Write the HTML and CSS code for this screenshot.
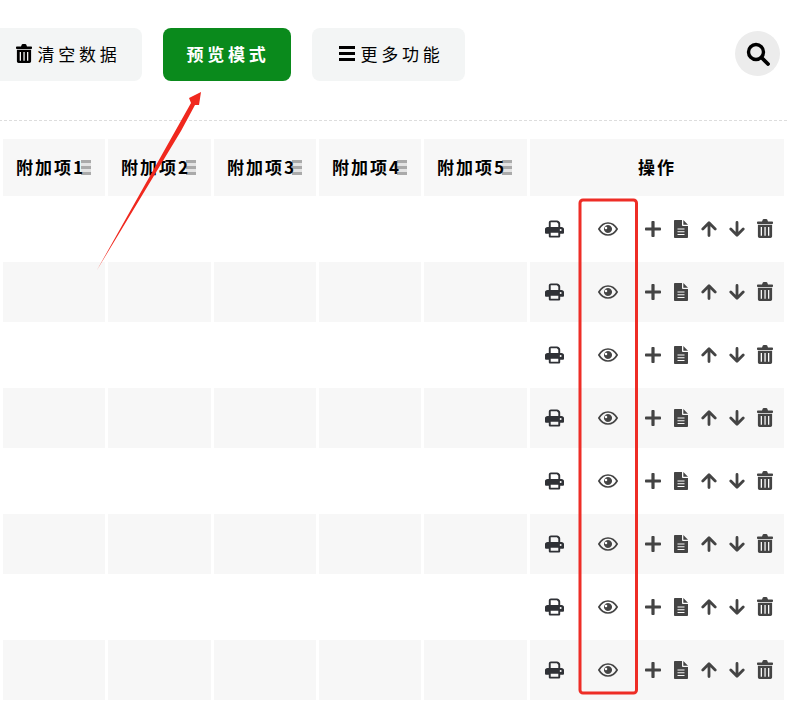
FILE: index.html
```html
<!DOCTYPE html>
<html lang="en">

<head>
    <meta charset="UTF-8">
    <meta name="viewport" content="width=device-width, initial-scale=1.0">
    <title>预览模式</title>
    <link rel="stylesheet" href="styles.css">
</head>

<body>
    <svg class="icon-defs" width="0" height="0">
        <symbol id="i-trash" viewBox="0 0 16 19">
            <path d="M5 2.400 5.800.6C6 .2 6.300 0 6.700 0h2.600c.4 0 .7.2.9.6L11 2.400h4.200c.5 0 .8.3.8.8v1c0 .4-.3.8-.8.8H.8c-.5 0-.8-.4-.8-.8v-1c0-.5.300-.8.800-.8z" />
            <path fill-rule="evenodd" d="M.9 5.700h14.200v11.600c0 .9-.8 1.700-1.700 1.700H2.600c-.9 0-1.700-.8-1.700-1.700zm2.800 2.300v8.800h1.300V8zm3.700 0v8.800h1.300V8zm3.600 0v8.800h1.300V8z" />
        </symbol>
        <symbol id="i-print" viewBox="0 0 20 18">
            <path fill-rule="evenodd" d="M4 7V2.200C4 1 5 0 6.200 0h6.600c.6 0 1.100.2 1.500.6l1.100 1.100c.4.400.6.900.6 1.500V7h1.200C19 7 20 8 20 9.300V13c0 .6-.4 1-1 1h-3v2.500c0 .8-.7 1.500-1.500 1.500h-9C4.700 18 4 17.300 4 16.500V14H1c-.6 0-1-.4-1-1V9.300C0 8 1 7 2.800 7zm2-5v5h8V3.500L12.500 2zm0 11v3h8v-3zm10.500-4a1 1 0 1 0 0 2 1 1 0 0 0 0-2z" />
        </symbol>
        <symbol id="i-eye" viewBox="0 0 20 14">
            <path fill="none" stroke="currentColor" stroke-width="1.700" d="M.9 7C3.200 3 6.400 1 10 1s6.800 2 9.100 6c-2.300 4-5.500 6-9.100 6S3.200 11 .9 7z" />
            <path fill-rule="evenodd" d="M10 3a4 4 0 1 1-.01 0zM8 4.700a1.300 1.300 0 1 0 .01 2.600A1.300 1.300 0 0 0 8 4.700z" />
        </symbol>
        <symbol id="i-plus" viewBox="0 0 16 16">
            <path d="M6.400 1c0-.6.500-1 1-1h1.200c.6 0 1 .4 1 1v5.400H15c.6 0 1 .5 1 1v1.200c0 .6-.4 1-1 1H9.600V15c0 .6-.4 1-1 1H7.400c-.5 0-1-.4-1-1V9.600H1c-.6 0-1-.4-1-1V7.400c0-.5.4-1 1-1h5.400z" />
        </symbol>
        <symbol id="i-file" viewBox="0 0 14 18">
            <path fill-rule="evenodd" d="M0 .8C0 .4.400 0 .8 0H8v5c0 .5.500 1 1 1h5v11.200c0 .4-.4.800-.8.800H.8c-.4 0-.8-.4-.8-.8zM3.500 8.500v1.100h7V8.500zm0 2.700v1.100h7v-1.100zm0 2.700v1.100h7v-1.100z" />
            <path d="M9.300 0 14 4.700H9.300z" />
        </symbol>
        <symbol id="i-up" viewBox="0 0 16 16">
            <path fill="none" stroke="currentColor" stroke-width="2.800" stroke-linecap="round" stroke-linejoin="round" d="M8 14.600V2M1.800 8 8 1.800 14.200 8" />
        </symbol>
        <symbol id="i-down" viewBox="0 0 16 16">
            <path fill="none" stroke="currentColor" stroke-width="2.800" stroke-linecap="round" stroke-linejoin="round" d="M8 1.400V14M1.800 8 8 14.200 14.200 8" />
        </symbol>
    </svg>

    <div class="page">
        <div class="toolbar">
            <button class="btn">
                <svg class="btn-icon"><use href="#i-trash" /></svg>
                <span>清空数据</span>
            </button>
            <button class="btn btn-green">预览模式</button>
            <button class="btn">
                <span class="bars"><i></i><i></i><i></i></span>
                <span>更多功能</span>
            </button>
            <button class="search">
                <svg viewBox="0 0 24 24" width="24" height="24">
                    <circle cx="10" cy="10" r="7.500" fill="none" stroke="#000" stroke-width="3.400" />
                    <path d="M15.500 15.500 22 22" stroke="#000" stroke-width="3.800" stroke-linecap="round" />
                </svg>
            </button>
        </div>

        <table class="grid">
            <thead>
                <tr>
                    <th class="w102"><span class="sort"></span><span class="th-text">附加项1</span></th>
                    <th class="w103"><span class="sort"></span><span class="th-text">附加项2</span></th>
                    <th class="w102"><span class="sort"></span><span class="th-text">附加项3</span></th>
                    <th class="w102"><span class="sort"></span><span class="th-text">附加项4</span></th>
                    <th class="w103"><span class="sort"></span><span class="th-text">附加项5</span></th>
                    <th class="op"><span class="th-text">操作</span></th>
                </tr>
            </thead>
            <tbody id="rows"></tbody>
        </table>

        <!-- annotation drawn over the screenshot -->
        <svg class="marks" width="800" height="704">
            <polygon points="97,270 191,103 189,98 201,92 199,105 195,105 181,131" fill="#f0281e" />
            <rect x="580" y="200" width="56.500" height="493" rx="3" fill="none" stroke="#ee2d26" stroke-width="3" />
        </svg>
    </div>

    <script>
        const rows = document.getElementById("rows");
        const cell = "<td></td>".repeat(5);
        const icon = (name) => `<svg class="ico ico-${name}"><use href="#i-${name}" /></svg>`;

        for (let i = 0; i < 8; i++) {
            const tr = document.createElement("tr");
            tr.innerHTML = cell + `<td><div class="actions">
                <span class="act-print">${icon("print")}</span>
                <span class="act-eye">${icon("eye")}</span>
                <span class="act">${icon("plus")}</span>
                <span class="act">${icon("file")}</span>
                <span class="act">${icon("up")}</span>
                <span class="act">${icon("down")}</span>
                <span class="act">${icon("trash")}</span>
            </div></td>`;
            rows.appendChild(tr);
        }
    </script>
</body>

</html>
```

FILE: styles.css
```css
* {
    box-sizing: border-box;
}

body {
    margin: 0;
    background-color: #ffffff;
    font-family: "Noto Sans CJK SC", "Noto Sans", sans-serif;
    overflow: hidden;
}

.icon-defs {
    position: absolute;
}

.page {
    position: relative;
    width: 787px;
    height: 704px;
}

.toolbar {
    display: flex;
    align-items: center;
    gap: 21px;
    height: 121px;
    margin-left: -11px;
    padding-bottom: 11px;
    border-bottom: 1px dashed #dddddd;
}

.btn {
    display: flex;
    align-items: center;
    justify-content: center;
    gap: 6px;
    width: 153px;
    height: 53px;
    padding: 0 0 2px 5px;
    border: none;
    border-radius: 8px;
    background-color: #f3f5f5;
    color: #000000;
    font-family: inherit;
    font-size: 17px;
    letter-spacing: 3.700px;
}

.btn-green {
    width: 128px;
    padding-left: 2px;
    background-color: #0a8a1c;
    color: #ffffff;
    font-weight: 700;
}

.btn-icon {
    width: 16px;
    height: 19px;
    fill: #000000;
}

.bars {
    display: flex;
    flex-direction: column;
    gap: 3px;
    width: 16px;
}

.bars i {
    display: block;
    height: 3px;
    background-color: #000000;
}

.search {
    display: flex;
    align-items: center;
    justify-content: center;
    width: 45px;
    height: 45px;
    margin-left: auto;
    margin-right: 7px;
    margin-bottom: 2px;
    padding: 0;
    border: none;
    border-radius: 50%;
    background-color: #ececec;
}

.grid {
    table-layout: fixed;
    width: 787px;
    margin-top: 15px;
    border-collapse: separate;
    border-spacing: 3px;
}

.grid th {
    position: relative;
    height: 57px;
    padding: 0 0 2px 13px;
    background-color: #f7f7f7;
    color: #000000;
    font-size: 17px;
    font-weight: 700;
    letter-spacing: 2px;
    text-align: left;
}

.th-text {
    position: relative;
}

.w102 {
    width: 102px;
}

.w103 {
    width: 103px;
}

.grid th.op {
    padding: 0 0 2px;
    text-align: center;
}

.sort {
    position: absolute;
    left: 78px;
    top: 21px;
    width: 10px;
    height: 15px;
    background: repeating-linear-gradient(#aaaaaa 0 3px, #e4e4e4 3px 6px);
}

.grid td {
    height: 60px;
    padding: 0;
}

.grid tbody tr:nth-child(even) td {
    background-color: #f7f7f7;
}

.actions {
    display: flex;
    align-items: center;
    padding-bottom: 1px;
    color: #444444;
    fill: #444444;
}

.act-print {
    display: flex;
    justify-content: center;
    width: 49px;
    color: #2f3136;
    fill: #2f3136;
}

.act-eye {
    display: flex;
    justify-content: center;
    width: 58px;
    margin-right: 2px;
}

.act {
    display: flex;
    justify-content: center;
    width: 28px;
}

.ico {
    width: 16px;
    height: 16px;
}

.ico-print {
    width: 19px;
    height: 18px;
}

.ico-eye {
    width: 20px;
    height: 14px;
}

.ico-file {
    width: 14px;
    height: 18px;
}

.ico-trash {
    width: 16px;
    height: 19px;
}

.marks {
    position: absolute;
    left: 0;
    top: 0;
    pointer-events: none;
}
```
